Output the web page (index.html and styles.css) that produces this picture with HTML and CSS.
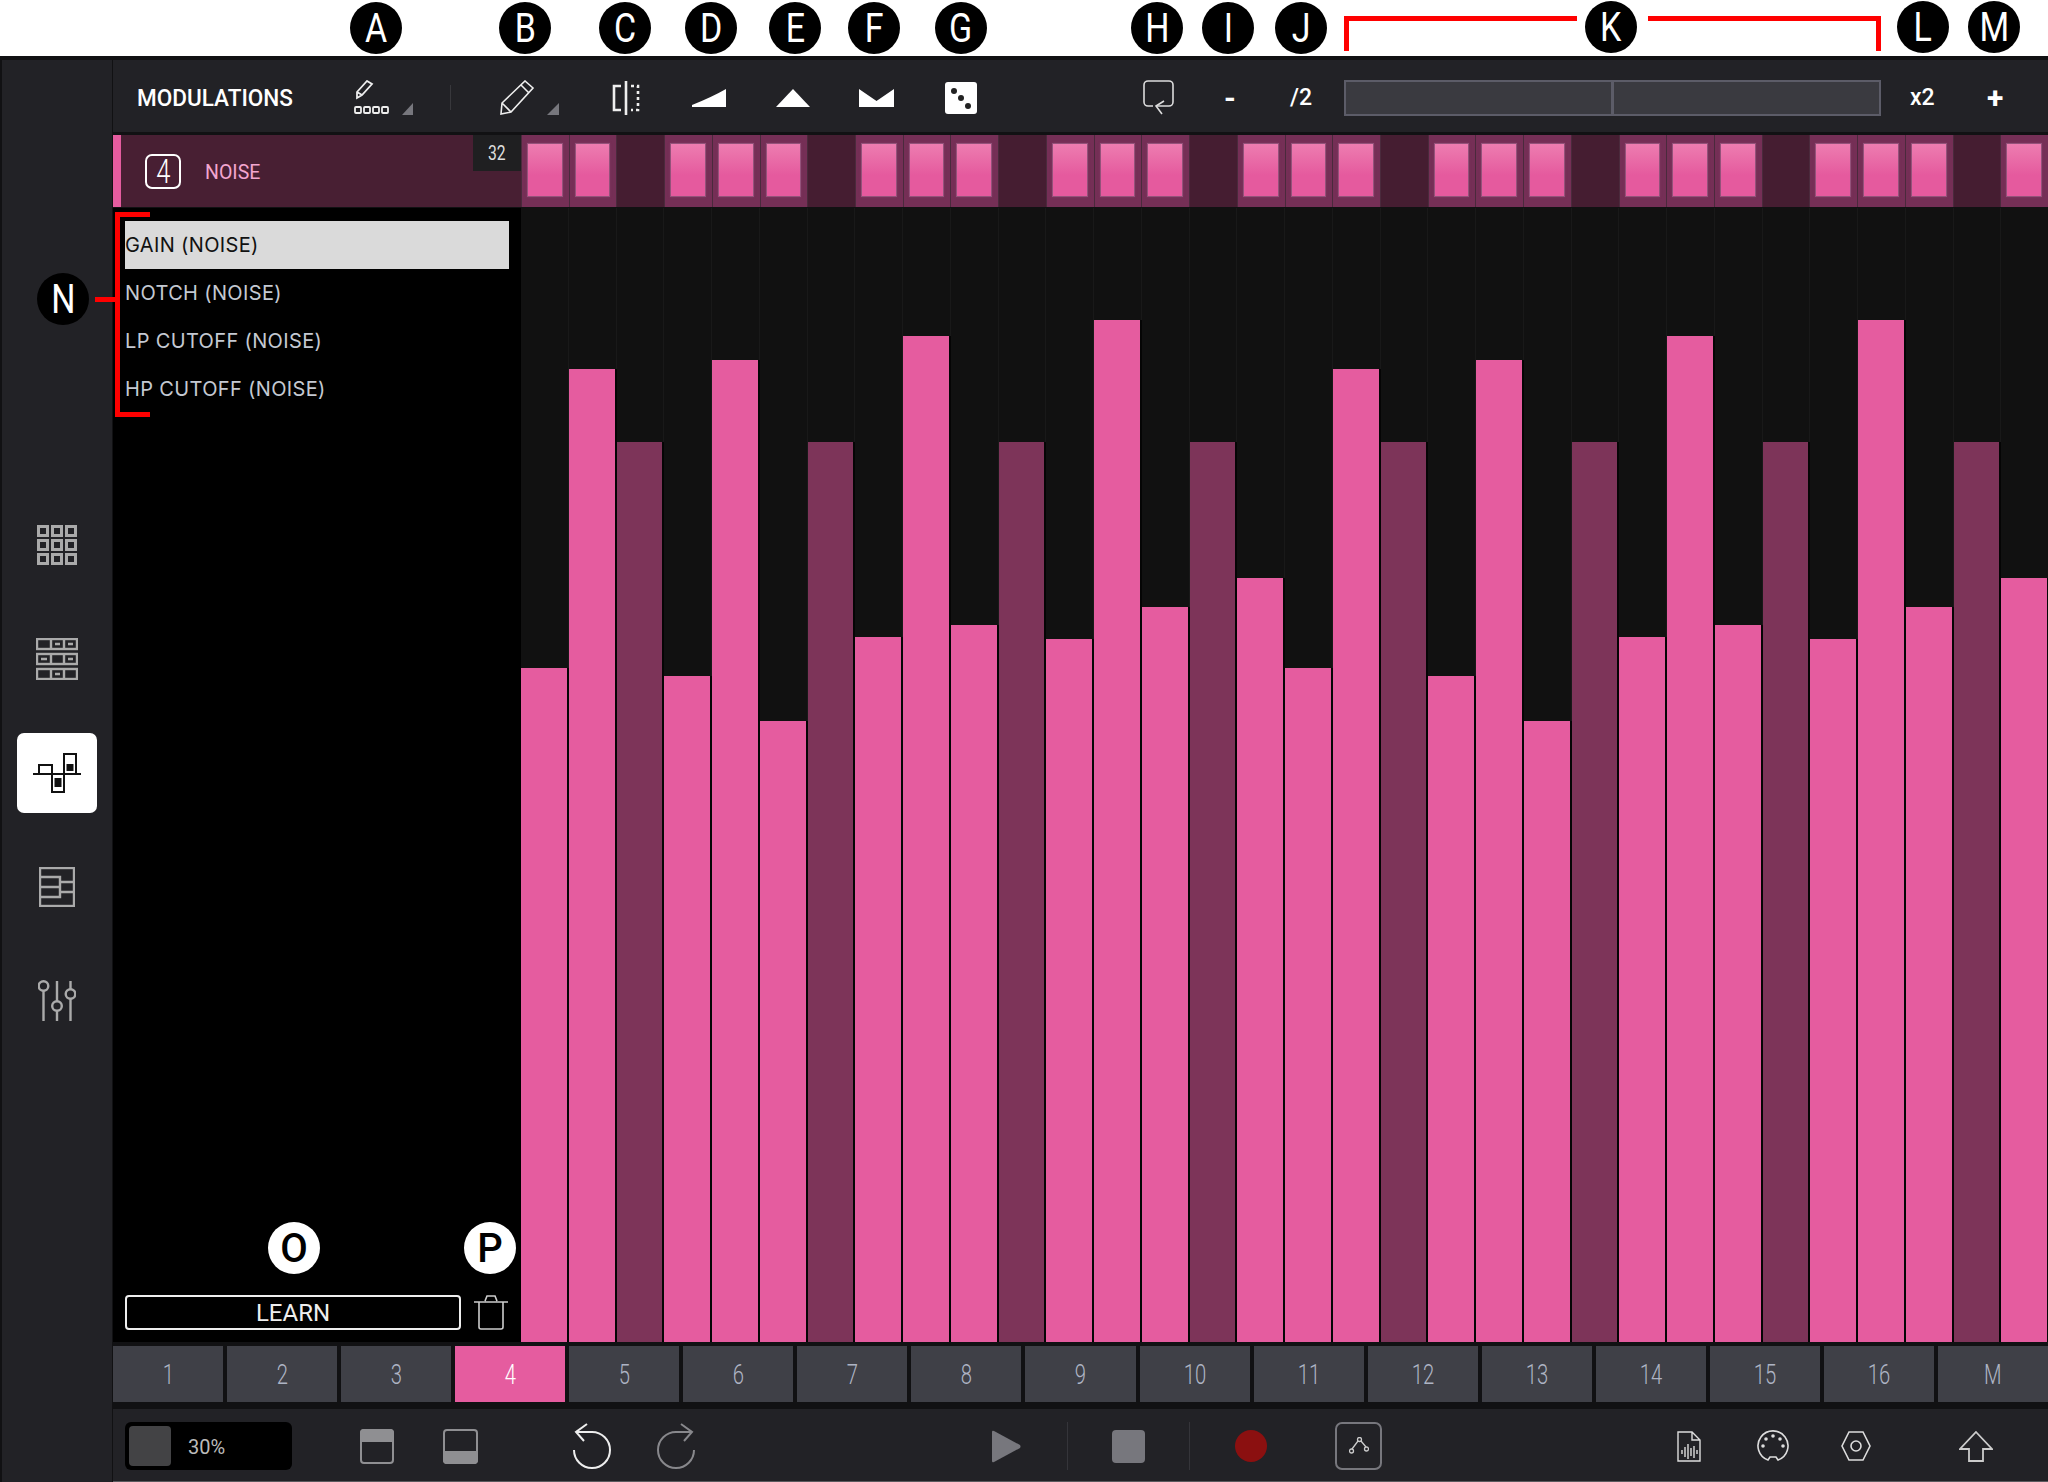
FILE: index.html
```html
<!DOCTYPE html>
<html lang="en">
<head>
  <meta charset="UTF-8">
  <title>Modulations</title>
  <link rel="stylesheet" href="styles.css">
</head>
<body>

  <div class="top-strip"></div>

  <div class="app">
    <nav class="sidebar">
      <div class="side-item">
        <svg width="40" height="40" viewBox="0 0 40 40" fill="none" stroke="#aaa" stroke-width="3">
          <rect x="1.5" y="1.5" width="9" height="9"/><rect x="15.5" y="1.5" width="9" height="9"/><rect x="29.5" y="1.5" width="9" height="9"/>
          <rect x="1.5" y="15.5" width="9" height="9"/><rect x="15.5" y="15.5" width="9" height="9"/><rect x="29.5" y="15.5" width="9" height="9"/>
          <rect x="1.5" y="29.5" width="9" height="9"/><rect x="15.5" y="29.5" width="9" height="9"/><rect x="29.5" y="29.5" width="9" height="9"/>
        </svg>
      </div>
      <div class="side-item">
        <svg width="42" height="42" viewBox="0 0 42 42" fill="none" stroke="#aaa" stroke-width="2.4">
          <rect x="1" y="1" width="40" height="10"/><path d="M15 1v10M28 1v10"/>
          <rect x="1" y="16" width="40" height="10"/><path d="M15 16v10M28 16v10"/>
          <rect x="1" y="31" width="40" height="10"/><path d="M15 31v10M28 31v10"/>
          <path d="M19 6h5M32 6h5M5 21h6M32 21h5M19 36h5" stroke-width="2.4"/>
        </svg>
      </div>
      <div class="side-item side-active">
        <svg width="48" height="40" viewBox="0 0 48 40" fill="none" stroke="#111" stroke-width="2">
          <path d="M0 21h48"/>
          <path d="M6 21v-9h13v9M19 21v18h12V21M31 21V1h12v20"/>
          <rect x="21.5" y="25" width="7" height="9" fill="#111" stroke="none"/>
          <rect x="33.5" y="11" width="7" height="7" fill="#111" stroke="none"/>
        </svg>
      </div>
      <div class="side-item">
        <svg width="36" height="40" viewBox="0 0 36 40" fill="none" stroke="#aaa" stroke-width="2.4">
          <rect x="1" y="1" width="34" height="38"/>
          <path d="M1 10h20v10H1M1 20h20v10H1M21 15h14M21 25h14"/>
        </svg>
      </div>
      <div class="side-item">
        <svg width="38" height="42" viewBox="0 0 38 42" fill="none" stroke="#aaa" stroke-width="2.4">
          <path d="M5.500 11v30M19 1v20M19 31v10M32.500 1v8M32.500 19v22"/>
          <circle cx="5.500" cy="6" r="4.800"/><circle cx="19" cy="26" r="4.800"/><circle cx="32.500" cy="14" r="4.800"/>
        </svg>
      </div>
    </nav>

    <main class="main">
      <div class="toolbar">
        <span class="tb-title"><span class="title-text">MODULATIONS</span></span>

        <svg class="tb-a" width="60" height="36" viewBox="0 0 60 36" fill="none" stroke="#eee" stroke-width="1.8">
          <path d="M3 18l0-6 10-11 5 3-10 11zM3 12l5 3"/>
          <rect x="1" y="27" width="6" height="6" rx="1"/><rect x="10" y="27" width="6" height="6" rx="1"/><rect x="19" y="27" width="6" height="6" rx="1"/><rect x="28" y="27" width="6" height="6" rx="1"/>
          <path d="M48 35l11-12v12z" fill="#77777d" stroke="none"/>
        </svg>
        <span class="tb-sep"></span>
        <svg class="tb-b" width="60" height="36" viewBox="0 0 60 36" fill="none" stroke="#eee" stroke-width="1.6">
          <path d="M1 34l1-11L25 1l8 7-22 24zM2 23l9 9M21 5l8 8"/>
          <path d="M47 35l12-12v12z" fill="#77777d" stroke="none"/>
        </svg>
        <svg class="tb-c" width="28" height="34" viewBox="0 0 28 34" fill="none" stroke="#eee" stroke-width="2.6">
          <path d="M9 5H2v24h7M14 0v34"/>
          <path d="M19 5h7v24h-7" stroke-dasharray="3 3"/>
        </svg>
        <svg class="tb-d" width="34" height="18" viewBox="0 0 34 18"><path d="M0 16Q20 8 34 0v18H0z" fill="#fff"/></svg>
        <svg class="tb-e" width="34" height="18" viewBox="0 0 34 18"><path d="M17 0l17 18H0z" fill="#fff"/></svg>
        <svg class="tb-f" width="35" height="18" viewBox="0 0 35 18"><path d="M0 0l17.500 12L35 0v18H0z" fill="#fff"/></svg>
        <svg class="tb-g" width="32" height="32" viewBox="0 0 32 32">
          <rect width="32" height="32" rx="3" fill="#fff"/>
          <circle cx="9" cy="9" r="3" fill="#222"/><circle cx="16" cy="16" r="3" fill="#222"/><circle cx="23" cy="24" r="3" fill="#222"/>
        </svg>

        <svg class="tb-h" width="31" height="36" viewBox="0 0 31 36" fill="none" stroke="#ddd" stroke-width="1.6">
          <path d="M10 26H5a4 4 0 0 1-4-4V5a4 4 0 0 1 4-4h21a4 4 0 0 1 4 4v17a4 4 0 0 1-4 4H14"/>
          <path d="M21 21l-8 5 6 8"/>
        </svg>
        <span class="tb-i">-</span>
        <span class="tb-j">/2</span>
        <div class="zoom-bar"><span class="zoom-half"></span><span class="zoom-half"></span></div>
        <span class="tb-l">x2</span>
        <span class="tb-m">+</span>
      </div>

      <div class="track">
        <div class="track-head">
          <span class="track-num"><span class="narrow">4</span></span>
          <span class="track-name">NOISE</span>
          <span class="track-steps"><span class="narrow">32</span></span>
        </div>
        <div class="cells">
          <div class="cell on"><i></i></div><div class="cell on"><i></i></div><div class="cell"></div><div class="cell on"><i></i></div>
          <div class="cell on"><i></i></div><div class="cell on"><i></i></div><div class="cell"></div><div class="cell on"><i></i></div>
          <div class="cell on"><i></i></div><div class="cell on"><i></i></div><div class="cell"></div><div class="cell on"><i></i></div>
          <div class="cell on"><i></i></div><div class="cell on"><i></i></div><div class="cell"></div><div class="cell on"><i></i></div>
          <div class="cell on"><i></i></div><div class="cell on"><i></i></div><div class="cell"></div><div class="cell on"><i></i></div>
          <div class="cell on"><i></i></div><div class="cell on"><i></i></div><div class="cell"></div><div class="cell on"><i></i></div>
          <div class="cell on"><i></i></div><div class="cell on"><i></i></div><div class="cell"></div><div class="cell on"><i></i></div>
          <div class="cell on"><i></i></div><div class="cell on"><i></i></div><div class="cell"></div><div class="cell on"><i></i></div>
        </div>
      </div>

      <div class="content">
        <aside class="mod-panel">
          <ul class="mod-list">
            <li class="selected">GAIN (NOISE)</li>
            <li>NOTCH (NOISE)</li>
            <li>LP CUTOFF (NOISE)</li>
            <li>HP CUTOFF (NOISE)</li>
          </ul>
          <div class="learn-row">
            <button class="learn">LEARN</button>
            <svg width="34" height="35" viewBox="0 0 34 35" fill="none" stroke="#ccc" stroke-width="1.6">
              <path d="M0 7h34M11 6l2-5h8l2 5M5 7v25a2 2 0 0 0 2 2h20a2 2 0 0 0 2-2V7"/>
            </svg>
          </div>
        </aside>

        <div class="bars">
          <div class="col"><div class="bar" style="height:59.4%"></div></div>
          <div class="col"><div class="bar" style="height:85.8%"></div></div>
          <div class="col"><div class="bar off" style="height:79.4%"></div></div>
          <div class="col"><div class="bar" style="height:58.7%"></div></div>
          <div class="col"><div class="bar" style="height:86.6%"></div></div>
          <div class="col"><div class="bar" style="height:54.8%"></div></div>
          <div class="col"><div class="bar off" style="height:79.4%"></div></div>
          <div class="col"><div class="bar" style="height:62.2%"></div></div>
          <div class="col"><div class="bar" style="height:88.7%"></div></div>
          <div class="col"><div class="bar" style="height:63.2%"></div></div>
          <div class="col"><div class="bar off" style="height:79.4%"></div></div>
          <div class="col"><div class="bar" style="height:62%"></div></div>
          <div class="col"><div class="bar" style="height:90.1%"></div></div>
          <div class="col"><div class="bar" style="height:64.8%"></div></div>
          <div class="col"><div class="bar off" style="height:79.4%"></div></div>
          <div class="col"><div class="bar" style="height:67.4%"></div></div>
          <div class="col"><div class="bar" style="height:59.4%"></div></div>
          <div class="col"><div class="bar" style="height:85.8%"></div></div>
          <div class="col"><div class="bar off" style="height:79.4%"></div></div>
          <div class="col"><div class="bar" style="height:58.7%"></div></div>
          <div class="col"><div class="bar" style="height:86.6%"></div></div>
          <div class="col"><div class="bar" style="height:54.8%"></div></div>
          <div class="col"><div class="bar off" style="height:79.4%"></div></div>
          <div class="col"><div class="bar" style="height:62.2%"></div></div>
          <div class="col"><div class="bar" style="height:88.7%"></div></div>
          <div class="col"><div class="bar" style="height:63.2%"></div></div>
          <div class="col"><div class="bar off" style="height:79.4%"></div></div>
          <div class="col"><div class="bar" style="height:62%"></div></div>
          <div class="col"><div class="bar" style="height:90.1%"></div></div>
          <div class="col"><div class="bar" style="height:64.8%"></div></div>
          <div class="col"><div class="bar off" style="height:79.4%"></div></div>
          <div class="col"><div class="bar" style="height:67.4%"></div></div>
        </div>
      </div>

      <div class="pads">
        <div class="pad"><span class="narrow">1</span></div>
        <div class="pad"><span class="narrow">2</span></div>
        <div class="pad"><span class="narrow">3</span></div>
        <div class="pad active"><span class="narrow">4</span></div>
        <div class="pad"><span class="narrow">5</span></div>
        <div class="pad"><span class="narrow">6</span></div>
        <div class="pad"><span class="narrow">7</span></div>
        <div class="pad"><span class="narrow">8</span></div>
        <div class="pad"><span class="narrow">9</span></div>
        <div class="pad"><span class="narrow">10</span></div>
        <div class="pad"><span class="narrow">11</span></div>
        <div class="pad"><span class="narrow">12</span></div>
        <div class="pad"><span class="narrow">13</span></div>
        <div class="pad"><span class="narrow">14</span></div>
        <div class="pad"><span class="narrow">15</span></div>
        <div class="pad"><span class="narrow">16</span></div>
        <div class="pad"><span class="narrow">M</span></div>
      </div>

      <div class="transport">
        <div class="volume"><span class="volume-box"></span><span class="volume-text">30%</span></div>
        <svg class="tr-ptop" width="34" height="35" viewBox="0 0 34 35">
          <path d="M1 12V4a3 3 0 0 1 3-3h26a3 3 0 0 1 3 3v8z" fill="#8f8f92" stroke="#8f8f92" stroke-width="2"/>
          <rect x="1" y="1" width="32" height="33" rx="3" fill="none" stroke="#8f8f92" stroke-width="2"/>
        </svg>
        <svg class="tr-pbot" width="35" height="35" viewBox="0 0 35 35">
          <path d="M1 23v8a3 3 0 0 0 3 3h27a3 3 0 0 0 3-3v-8z" fill="#8f8f92" stroke="#8f8f92" stroke-width="2"/>
          <rect x="1" y="1" width="33" height="33" rx="3" fill="none" stroke="#8f8f92" stroke-width="2"/>
        </svg>
        <svg class="tr-undo" width="39" height="46" viewBox="0 0 39 46" fill="none" stroke="#eee" stroke-width="2">
          <path d="M14 1L3 9l8 9"/><path d="M3 9H19A18 18 0 1 1 1 27"/>
        </svg>
        <svg class="tr-redo" width="38" height="46" viewBox="0 0 38 46" fill="none" stroke="#88888c" stroke-width="2">
          <path d="M24 1l11 8-8 9"/><path d="M35 9H19A18 18 0 1 0 37 27"/>
        </svg>
        <svg class="tr-play" width="30" height="33" viewBox="0 0 30 33"><path d="M1 2q0-2 2-1l26 14q1 1.500 0 3L3 32q-2 1-2-1z" fill="#77777d"/></svg>
        <span class="tr-sep sep-1"></span>
        <span class="tr-stop"></span>
        <span class="tr-sep sep-2"></span>
        <span class="tr-rec"></span>
        <span class="tr-env">
          <svg width="20" height="18" viewBox="0 0 20 18" fill="none" stroke="#ccc" stroke-width="1.300">
            <path d="M3 12L9 4M12 4l5 6"/>
            <circle cx="2.500" cy="14" r="2"/><circle cx="10.500" cy="2.500" r="2"/><circle cx="17.500" cy="12" r="2"/>
          </svg>
        </span>
        <svg class="tr-file" width="24" height="31" viewBox="0 0 24 31" fill="none" stroke="#ddd" stroke-width="1.400">
          <path d="M1 1h14l8 8v21H1zM15 1v8h8"/>
          <path d="M5 19v4M8 16v10M11 13v15M14 17v8M17 15v12M20 19v4"/>
        </svg>
        <svg class="tr-midi" width="32" height="32" viewBox="0 0 32 32" fill="none" stroke="#ddd" stroke-width="1.600">
          <path d="M11 30A15 15 0 1 1 21 30l-2-3h-6z"/>
          <g fill="#ddd" stroke="none"><circle cx="6" cy="16" r="1.800"/><circle cx="9" cy="9" r="1.800"/><circle cx="16" cy="6" r="1.800"/><circle cx="23" cy="9" r="1.800"/><circle cx="26" cy="16" r="1.800"/></g>
        </svg>
        <svg class="tr-nut" width="30" height="32" viewBox="0 0 30 32" fill="none" stroke="#ddd" stroke-width="1.600">
          <path d="M8 2h14l7 14-7 14H8L1 16z"/><circle cx="15" cy="16" r="5"/>
        </svg>
        <svg class="tr-home" width="34" height="31" viewBox="0 0 34 31" fill="none" stroke="#ccc" stroke-width="1.800">
          <path d="M17 1l16 17H24v12H10V18H1z"/>
        </svg>
      </div>
    </main>
  </div>

  <!-- callouts on the screenshot -->
  <span class="tag tag-a"><span>A</span></span>
  <span class="tag tag-b"><span>B</span></span>
  <span class="tag tag-c"><span>C</span></span>
  <span class="tag tag-d"><span>D</span></span>
  <span class="tag tag-e"><span>E</span></span>
  <span class="tag tag-f"><span>F</span></span>
  <span class="tag tag-g"><span>G</span></span>
  <span class="tag tag-h"><span>H</span></span>
  <span class="tag tag-i"><span>I</span></span>
  <span class="tag tag-j"><span>J</span></span>
  <span class="tag tag-k"><span>K</span></span>
  <span class="tag tag-l"><span>L</span></span>
  <span class="tag tag-m"><span>M</span></span>
  <span class="tag tag-n"><span>N</span></span>
  <span class="tag light tag-o">O</span>
  <span class="tag light tag-p">P</span>
  <span class="bracket bracket-k1"></span>
  <span class="bracket bracket-k2"></span>
  <span class="bracket bracket-n"></span>
  <span class="bracket-stem"></span>

</body>
</html>
```

FILE: styles.css
```css
body {
  margin: 0;
  width: 2048px;
  height: 1482px;
  overflow: hidden;
  position: relative;
  background: #fff;
  font-family: Roboto, Arial, sans-serif;
  color: #fff;
}

.top-strip {
  height: 56px;
}

.narrow {
  display: inline-block;
  transform: scaleX(0.75);
}

.app {
  display: flex;
  height: 1426px;
  box-sizing: border-box;
  padding: 4px 0 0 2px;
  background: #111113;
}

/* sidebar */
.sidebar {
  width: 110px;
  flex: none;
  box-sizing: border-box;
  padding-top: 445px;
  background: #222226;
  display: flex;
  flex-direction: column;
  align-items: center;
  gap: 34px;
}

.side-item {
  width: 80px;
  height: 80px;
  margin-left: -30px;
  margin-right: -1px;
  display: flex;
  align-items: center;
  justify-content: center;
  transform: translateX(14px);
}

.side-active {
  background: #fff;
  border-radius: 7px;
}

.main {
  flex: 1;
  min-width: 0;
  margin-left: 1px;
  display: flex;
  flex-direction: column;
}

/* toolbar */
.toolbar {
  height: 72px;
  flex: none;
  box-sizing: border-box;
  padding-top: 3px;
  margin-bottom: 3px;
  background: #222226;
  display: flex;
  align-items: center;
}

.tb-title {
  width: 155px;
  margin-left: 24px;
  padding-top: 2px;
  font-size: 23px;
  font-weight: 500;
  white-space: nowrap;
}

.title-text {
  display: inline-block;
  transform: scaleX(0.98);
  transform-origin: left;
}

.tb-a { margin-left: 62px; }
.tb-sep { width: 1px; height: 25px; margin-left: 36px; background: #38383c; }
.tb-b { margin-left: 49px; }
.tb-c { margin-left: 52px; }
.tb-d { margin-left: 52px; }
.tb-e { margin-left: 50px; }
.tb-f { margin-left: 49px; }
.tb-g { margin-left: 51px; }
.tb-h { margin-left: 166px; }

.tb-i {
  width: 14px;
  margin-left: 49px;
  font-size: 30px;
  font-weight: 700;
  text-align: center;
  line-height: 1;
}

.tb-j {
  width: 25px;
  margin-left: 53px;
  font-size: 23px;
  font-weight: 500;
  white-space: nowrap;
}

.zoom-bar {
  width: 537px;
  height: 36px;
  margin-left: 29px;
  box-sizing: border-box;
  border: 2px solid #5c5c68;
  background: #3a3a40;
  display: flex;
}

.zoom-half {
  flex: 1;
}

.zoom-half + .zoom-half {
  border-left: 3px solid #5c5c68;
}

.tb-l {
  width: 25px;
  margin-left: 29px;
  font-size: 23px;
  font-weight: 500;
}

.tb-m {
  width: 16px;
  margin-left: 52px;
  font-size: 30px;
  font-weight: 700;
  line-height: 1;
  text-align: center;
}

/* track row */
.track {
  height: 72px;
  flex: none;
  margin-bottom: 1px;
  display: flex;
  background: #481f33;
}

.track-head {
  width: 408px;
  flex: none;
  box-sizing: border-box;
  border-left: 8px solid #e55c9f;
  display: flex;
  align-items: center;
}

.track-num {
  width: 36px;
  height: 35px;
  margin-left: 24px;
  box-sizing: border-box;
  border: 2px solid #fff;
  border-radius: 7px;
  display: flex;
  align-items: center;
  justify-content: center;
  font-size: 34px;
  font-weight: 300;
}

.track-name {
  margin-left: 24px;
  padding-top: 2px;
  font-size: 19.5px;
  color: #f3a6cf;
}

.track-steps {
  width: 48px;
  height: 36px;
  margin-left: auto;
  align-self: flex-start;
  background: #1f1f21;
  color: #ddd;
  font-size: 21px;
  display: flex;
  align-items: center;
  justify-content: center;
}

.cells {
  flex: 1;
  display: grid;
  grid-template-columns: repeat(32, 1fr);
}

.cell {
  background: #451d31;
  border-left: 1px solid #4a2a3c;
  padding: 9px 7px 11px 6px;
  display: flex;
}

.cell.on {
  background: #752f56;
}

.cell i {
  flex: 1;
  background: linear-gradient(#ed7db0, #e55a9e 60%);
  box-shadow: 0 0 0 1px #94527a, 0 0 2px 1px #7f3a62;
}

/* modulation list and bars */
.content {
  flex: 1;
  min-height: 0;
  display: flex;
  background: #000;
}

.mod-panel {
  width: 408px;
  flex: none;
  box-sizing: border-box;
  padding: 13px 12px 12px;
  display: flex;
  flex-direction: column;
  justify-content: space-between;
}

.mod-list {
  list-style: none;
  margin: 0;
  padding: 0;
  font-family: Inter, Arial, sans-serif;
  font-size: 20px;
  letter-spacing: 0.35px;
  color: #c4c9d2;
}

.mod-list li {
  height: 48px;
  line-height: 49px;
  width: 384px;
}

.mod-list .selected {
  background: #dadada;
  color: #111;
}

.learn-row {
  display: flex;
  align-items: center;
  gap: 13px;
}

.learn {
  width: 336px;
  height: 35px;
  padding: 0;
  box-sizing: border-box;
  border: 2px solid #eee;
  border-radius: 4px;
  background: #000;
  color: #eee;
  font-family: Roboto, Arial, sans-serif;
  font-size: 24px;
  line-height: 1;
}

.bars {
  flex: 1;
  margin-right: -1px;
  display: grid;
  grid-template-columns: repeat(32, 1fr);
}

.col {
  background: #111;
  box-shadow: inset -1px 0 #191919;
  display: flex;
  align-items: flex-end;
}

.bar {
  width: calc(100% - 2px);
  background: #e55c9f;
  box-shadow: 2px 0 0 #050505;
}

.bar.off {
  background: #7d3459;
}

/* step pads */
.pads {
  height: 56px;
  flex: none;
  margin: 4px 0 7px;
  display: grid;
  grid-template-columns: repeat(17, 1fr);
  gap: 4px;
}

.pad {
  box-sizing: border-box;
  padding-top: 2px;
  background: #3f4047;
  color: #aeb4c4;
  font-size: 27px;
  font-weight: 300;
  display: flex;
  align-items: center;
  justify-content: center;
}

.pad.active {
  background: #e55c9f;
  color: #fff;
}

/* bottom bar */
.transport {
  height: 73px;
  flex: none;
  box-sizing: border-box;
  padding-top: 2px;
  border-bottom: 1px solid #5a5a5e;
  background: #222226;
  display: flex;
  align-items: center;
}

.volume {
  width: 167px;
  height: 48px;
  margin-left: 12px;
  box-sizing: border-box;
  padding: 4px;
  background: #000;
  border-radius: 6px;
  display: flex;
  align-items: center;
}

.volume-box {
  width: 42px;
  height: 40px;
  background: #434345;
  border-radius: 4px;
}

.volume-text {
  margin-left: 17px;
  padding-top: 2px;
  font-size: 20px;
  color: #bbb;
}

.tr-ptop { margin-left: 68px; }
.tr-pbot { margin-left: 49px; }
.tr-undo { margin-left: 95px; }
.tr-redo { margin-left: 45px; }
.tr-play { margin-left: 296px; }
.tr-sep { width: 1px; height: 48px; background: #35353a; }
.sep-1 { margin-left: 46px; }
.tr-stop { width: 33px; height: 33px; margin-left: 44px; background: #77777d; border-radius: 4px; }
.sep-2 { margin-left: 44px; }
.tr-rec { width: 32px; height: 32px; margin-left: 45px; border-radius: 50%; background: #8b1010; }

.tr-env {
  width: 47px;
  height: 48px;
  margin-left: 68px;
  box-sizing: border-box;
  border: 2px solid #77777d;
  border-radius: 7px;
  display: flex;
  align-items: center;
  justify-content: center;
}

.tr-file { margin-left: 295px; }
.tr-midi { margin-left: 56px; }
.tr-nut { margin-left: 52px; }
.tr-home { margin-left: 88px; }

/* callouts */
.tag {
  position: absolute;
  width: 52px;
  height: 52px;
  margin: -26px 0 0 -26px;
  border-radius: 50%;
  background: #000;
  color: #fff;
  font-family: Roboto, Arial, sans-serif;
  font-size: 40px;
  display: flex;
  align-items: center;
  justify-content: center;
}

.tag span {
  display: inline-block;
  transform: scaleX(0.85);
}

.tag.light {
  background: #fff;
  color: #000;
  font-weight: 500;
}

.tag-a { left: 376px; top: 28px; }
.tag-b { left: 525px; top: 28px; }
.tag-c { left: 625px; top: 28px; }
.tag-d { left: 711px; top: 28px; }
.tag-e { left: 795px; top: 28px; }
.tag-f { left: 874px; top: 28px; }
.tag-g { left: 961px; top: 28px; }
.tag-h { left: 1157px; top: 28px; }
.tag-i { left: 1228px; top: 28px; }
.tag-j { left: 1301px; top: 28px; }
.tag-k { left: 1611px; top: 27px; }
.tag-l { left: 1923px; top: 27px; }
.tag-m { left: 1994px; top: 27px; }
.tag-n { left: 63px; top: 299px; }
.tag-o { left: 294px; top: 1248px; }
.tag-p { left: 490px; top: 1248px; }

.bracket {
  position: absolute;
  box-sizing: border-box;
  border: 0 solid #f00;
}

.bracket-k1 {
  left: 1344px;
  top: 16px;
  width: 233px;
  height: 35px;
  border-width: 5px 0 0 5px;
}

.bracket-k2 {
  left: 1648px;
  top: 16px;
  width: 233px;
  height: 35px;
  border-width: 5px 5px 0 0;
}

.bracket-n {
  left: 115px;
  top: 212px;
  width: 35px;
  height: 205px;
  border-width: 5px 0 5px 5px;
}

.bracket-stem {
  position: absolute;
  left: 95px;
  top: 297px;
  width: 20px;
  height: 5px;
  background: #f00;
}
```
